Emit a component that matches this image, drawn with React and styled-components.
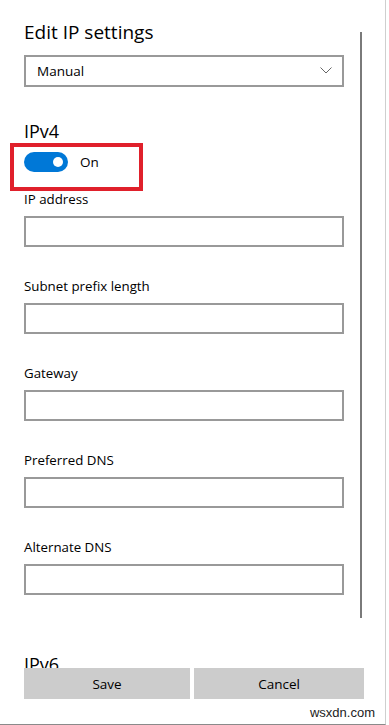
import React from 'react'
import styled, { createGlobalStyle } from 'styled-components'

const GlobalStyle = createGlobalStyle`
    html, body {
        margin: 0;
        padding: 0;
        background: #ffffff;
    }
    body {
        font-family: "Open Sans", "Noto Sans", "Liberation Sans", sans-serif;
        color: #000000;
    }
`

const fields = ["IP address", "Subnet prefix length", "Gateway", "Preferred DNS", "Alternate DNS"];

function App() {
    const fieldList = fields.map((name, index) => {
        return (
            <Field key={index} first={index === 0}>
                <Label>{name}</Label>
                <TextBox />
            </Field>
        )
    });

    return (
        <>
            <GlobalStyle />
            <Window>
                <ScrollArea>
                    <Title>Edit IP settings</Title>
                    <Dropdown>
                        <span>Manual</span>
                        <svg width="12" height="7" viewBox="0 0 12 7">
                            <path d="M0.5 0.5 L6 6 L11.5 0.5" fill="none" stroke="#666" strokeWidth="1" />
                        </svg>
                    </Dropdown>
                    <Heading>IPv4</Heading>
                    <Highlight>
                        <Toggle><Knob /></Toggle>
                        <ToggleText>On</ToggleText>
                    </Highlight>
                    {fieldList}
                    <Heading top={57}>IPv6</Heading>
                    <ScrollBar />
                </ScrollArea>
                <ButtonRow>
                    <Button width={166}>Save</Button>
                    <Button width={170}>Cancel</Button>
                </ButtonRow>
                <Footer>wsxdn.com</Footer>
            </Window>
        </>
    )
};

const Window = styled.div`
    width: 385px;
    height: 724px;
    border-right: 1px solid #cfcfcf;
    border-bottom: 1px solid #8a8a8a;
    display: flex;
    flex-direction: column;
    overflow: hidden;
`

const ScrollArea = styled.div`
    position: relative;
    height: 668px;
    flex-shrink: 0;
    overflow: hidden;
    padding-left: 24px;
    box-sizing: border-box;
`

const ScrollBar = styled.div`
    position: absolute;
    left: 360px;
    top: 32px;
    width: 2px;
    height: 586px;
    background: #7a7a7a;
`

const Title = styled.div`
    margin-top: 18px;
    font-size: 19px;
    line-height: 28px;
`

const Dropdown = styled.div`
    margin-top: 9px;
    width: 320px;
    height: 32px;
    box-sizing: border-box;
    border: 2px solid #999999;
    display: flex;
    align-items: center;
    justify-content: space-between;
    padding: 0 10px 0 11px;
    font-size: 13.5px;

    svg {
        margin-bottom: 1px;
    }
`

const Heading = styled.div`
    margin-top: ${props => props.top || 32}px;
    font-size: 18px;
    line-height: 24px;
`

const Highlight = styled.div`
    margin-left: -14px;
    width: 133px;
    height: 48px;
    box-sizing: border-box;
    border: 4px solid #e0202b;
    display: flex;
    align-items: flex-start;
    padding: 5px 0 0 10px;
`

const Toggle = styled.div`
    position: relative;
    width: 44px;
    height: 20px;
    border-radius: 10px;
    background: #0078d7;
`

const Knob = styled.div`
    position: absolute;
    right: 5px;
    top: 5px;
    width: 10px;
    height: 10px;
    border-radius: 50%;
    background: #ffffff;
`

const ToggleText = styled.div`
    margin-left: 12px;
    font-size: 13.5px;
    line-height: 20px;
`

const Field = styled.div`
    margin-top: ${props => props.first ? 0 : 31}px;
`

const Label = styled.div`
    font-size: 13.3px;
    line-height: 16px;
    margin-bottom: 9px;
`

const TextBox = styled.div`
    width: 320px;
    height: 31px;
    box-sizing: border-box;
    border: 2px solid #999999;
    background: #ffffff;
`

const ButtonRow = styled.div`
    display: flex;
    gap: 4px;
    padding-left: 24px;
`

const Button = styled.button`
    width: ${props => props.width}px;
    height: 31px;
    border: none;
    background: #cccccc;
    font-family: "Open Sans", "Noto Sans", sans-serif;
    font-size: 13.5px;
    color: #000000;
    padding: 0;
`

const Footer = styled.div`
    flex: 1;
    display: flex;
    align-items: center;
    justify-content: flex-end;
    padding-right: 10px;
    padding-top: 2px;
    font-family: "Liberation Sans", Arial, sans-serif;
    font-size: 13px;
    color: #222222;
`

export default App;
